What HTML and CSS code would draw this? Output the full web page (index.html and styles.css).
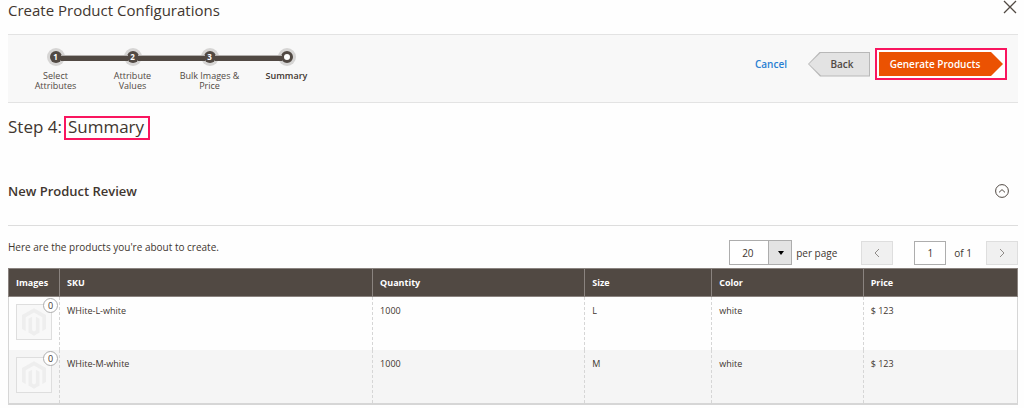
FILE: index.html
```html
<!DOCTYPE html>
<html lang="en">

<head>
    <meta charset="UTF-8">
    <meta name="viewport" content="width=device-width, initial-scale=1.0">
    <title>Create Product Configurations</title>
    <link rel="stylesheet" href="styles.css">
</head>

<body>
    <svg class="sprite" aria-hidden="true">
        <symbol id="placeholder-logo" viewBox="0 0 26 30">
            <path d="M13 0 L26 7.5 V22.5 L22 24.8 V9.8 L13 4.6 L4 9.8 V24.8 L0 22.5 V7.5 Z" />
            <path d="M7 11.5 L11 9.2 V24 L13 25.2 L15 24 V9.2 L19 11.5 V26.5 L13 30 L7 26.5 Z" />
        </symbol>
    </svg>

    <header class="modal-header">
        <h1 class="modal-title">Create Product Configurations</h1>
        <button class="close" type="button" aria-label="Close">
            <svg width="14" height="14" viewBox="0 0 14 14"><path d="M1 1 L13 13 M13 1 L1 13" /></svg>
        </button>
    </header>

    <main>
        <div class="wizard-bar">
            <ol class="steps">
                <li class="step"><span class="dot">1</span><a href="#">Select Attributes</a></li>
                <li class="step"><span class="dot">2</span><a href="#">Attribute Values</a></li>
                <li class="step"><span class="dot">3</span><a href="#">Bulk Images &amp; Price</a></li>
                <li class="step active"><span class="dot"></span><a href="#">Summary</a></li>
            </ol>
            <div class="actions">
                <a class="cancel" href="#">Cancel</a>
                <button class="back" type="button"><span>Back</span></button>
                <div class="highlight">
                    <button class="next" type="button">Generate Products</button>
                </div>
            </div>
        </div>

        <h2 class="step-title">Step 4: <span class="marked">Summary</span></h2>

        <div class="section-title">
            <h3>New Product Review</h3>
            <button class="collapse" type="button" aria-label="Collapse section">
                <svg width="14" height="14" viewBox="0 0 14 14"><circle cx="7" cy="7" r="6.4" /><path d="M4 8.4 L7 5.6 L10 8.4" /></svg>
            </button>
        </div>

        <div class="toolbar">
            <p class="note">Here are the products you're about to create.</p>
            <div class="page-size">
                <div class="select-wrap">
                    <select id="per-page">
                        <option>20</option>
                        <option>30</option>
                        <option>50</option>
                    </select>
                </div>
                <label for="per-page">per page</label>
            </div>
            <div class="pager">
                <button class="page-btn" type="button" aria-label="Previous page" disabled>
                    <svg width="6" height="10" viewBox="0 0 6 10"><path d="M5 1 L1 5 L5 9" /></svg>
                </button>
                <input class="page-input" id="page" type="text" value="1">
                <label class="page-count" for="page">of 1</label>
                <button class="page-btn" type="button" aria-label="Next page" disabled>
                    <svg width="6" height="10" viewBox="0 0 6 10"><path d="M1 1 L5 5 L1 9" /></svg>
                </button>
            </div>
        </div>

        <table class="data-grid">
            <colgroup>
                <col class="col-images">
                <col class="col-sku">
                <col class="col-qty">
                <col class="col-size">
                <col class="col-color">
                <col class="col-price">
            </colgroup>
            <thead>
                <tr>
                    <th>Images</th>
                    <th>SKU</th>
                    <th>Quantity</th>
                    <th>Size</th>
                    <th>Color</th>
                    <th>Price</th>
                </tr>
            </thead>
            <tbody>
                <tr>
                    <td>
                        <div class="thumb">
                            <svg width="24" height="28"><use href="#placeholder-logo" /></svg>
                            <span class="count">0</span>
                        </div>
                    </td>
                    <td>WHite-L-white</td>
                    <td>1000</td>
                    <td>L</td>
                    <td>white</td>
                    <td>$ 123</td>
                </tr>
                <tr>
                    <td>
                        <div class="thumb">
                            <svg width="24" height="28"><use href="#placeholder-logo" /></svg>
                            <span class="count">0</span>
                        </div>
                    </td>
                    <td>WHite-M-white</td>
                    <td>1000</td>
                    <td>M</td>
                    <td>white</td>
                    <td>$ 123</td>
                </tr>
            </tbody>
        </table>
    </main>
</body>

</html>
```
FILE: styles.css
```css
* {
    box-sizing: border-box;
}

body {
    margin: 0;
    padding: 0 6px 0 8px;
    font-family: "Open Sans", sans-serif;
    font-size: 10px;
    line-height: 14px;
    color: #41362f;
    background-color: #fefefe;
}

h1,
h2,
h3,
p {
    margin: 0;
    font-weight: 400;
}

button,
input,
select {
    font: inherit;
    color: inherit;
    margin: 0;
    padding: 0;
}

svg {
    display: block;
}

.sprite {
    position: absolute;
    width: 0;
    height: 0;
}

/* Header */
.modal-header {
    display: flex;
    justify-content: space-between;
    align-items: flex-start;
    height: 34px;
    padding-right: 1px;
}

.modal-title {
    font-size: 15px;
    line-height: 20px;
}

.close,
.collapse {
    border: none;
    background: none;
}

.close svg {
    stroke: #514943;
    stroke-width: 1.3;
}

/* Wizard bar */
.wizard-bar {
    display: flex;
    justify-content: space-between;
    height: 69px;
    padding: 0 11px 0 9px;
    border-top: 1px solid #e3e3e3;
    border-bottom: 1px solid #e3e3e3;
    background-color: #f8f8f8;
}

.steps {
    display: flex;
    margin: 0;
    padding: 14px 0 0;
    list-style: none;
}

.step {
    position: relative;
    display: flex;
    flex-direction: column;
    align-items: center;
    gap: 6px;
    width: 77px;
    padding: 0 6px;
    font-size: 9px;
    font-weight: 500;
    line-height: 10px;
    text-align: center;
}

.step a {
    color: #514943;
    text-decoration: none;
}

.step.active a {
    color: #41362f;
    font-weight: 600;
}

/* line from this dot to the next one */
.step:not(:last-child)::after {
    content: "";
    position: absolute;
    z-index: 3;
    top: 6px;
    left: calc(50% + 5px);
    width: calc(100% - 10px);
    height: 5px;
    border-top: 1px solid #b3b0ae;
    background-color: #514943;
}

.dot {
    position: relative;
    z-index: 2;
    width: 12px;
    height: 12px;
    margin: 2px;
    border-radius: 50%;
    background-color: #514943;
    box-shadow: 0 0 0 3px #d6d5d4;
    color: #ffffff;
    font-size: 8px;
    font-weight: 700;
    line-height: 12px;
}

.active .dot {
    border: 3px solid #514943;
    background-color: #ffffff;
}

.actions {
    display: flex;
    align-items: center;
    height: 58px;
    font-weight: 600;
}

.cancel {
    margin-right: 21px;
    color: #2a80d2;
    text-decoration: none;
}

.back {
    position: relative;
    width: 62px;
    height: 25px;
    padding-left: 6px;
    border: none;
    background-color: #b8b8b8;
    clip-path: polygon(0 50%, 12px 0, 100% 0, 100% 100%, 12px 100%);
    color: #514943;
}

.back::before {
    content: "";
    position: absolute;
    inset: 1px;
    background-color: #e3e3e3;
    clip-path: polygon(0 50%, 12px 0, 100% 0, 100% 100%, 12px 100%);
}

.back span {
    position: relative;
}

.highlight {
    margin-left: 5px;
    padding: 2px;
    border: 2px solid #f9155f;
    background-color: #ffffff;
}

.next {
    display: block;
    width: 124px;
    height: 24px;
    padding-right: 12px;
    border: none;
    background-color: #eb5202;
    clip-path: polygon(0 0, 112px 0, 100% 50%, 112px 100%, 0 100%);
    color: #ffffff;
}

/* Step content */
.step-title {
    display: flex;
    align-items: baseline;
    gap: 2px;
    margin-top: 13px;
    font-size: 17px;
    line-height: 18px;
}

.marked {
    padding: 0 4px 2px 2px;
    border: 2px solid #f9155f;
}

.section-title {
    display: flex;
    justify-content: space-between;
    align-items: center;
    height: 70px;
    margin-top: 16px;
    padding-right: 9px;
    border-bottom: 1px solid #dddddd;
}

.section-title h3 {
    font-size: 13px;
    font-weight: 600;
    line-height: 18px;
}

.collapse svg {
    fill: none;
    stroke: #514943;
    stroke-width: 1;
}

/* Toolbar */
.toolbar {
    display: flex;
    align-items: center;
    padding: 14px 0 3px;
}

.note {
    margin-right: auto;
    padding-bottom: 11px;
}

.page-size {
    display: flex;
    align-items: center;
    gap: 4px;
}

.select-wrap {
    position: relative;
}

.select-wrap select {
    display: block;
    width: 63px;
    height: 25px;
    padding-left: 12px;
    border: 1px solid #adadad;
    border-radius: 0;
    background: linear-gradient(90deg, #ffffff 38px, #adadad 38px, #adadad 39px, #e3e3e3 39px);
    appearance: none;
}

.select-wrap::after {
    content: "";
    position: absolute;
    top: 11px;
    right: 8px;
    border: 3px solid transparent;
    border-top: 4px solid #000000;
    border-bottom: none;
    pointer-events: none;
}

.pager {
    display: flex;
    align-items: center;
    margin-left: 24px;
}

.page-btn {
    display: flex;
    align-items: center;
    justify-content: center;
    width: 32px;
    height: 24px;
    border: 1px solid #dedede;
    background-color: #f0f0f0;
}

.page-btn svg {
    fill: none;
    stroke: #8f8b88;
}

.page-input {
    width: 32px;
    height: 24px;
    margin-left: 21px;
    border: 1px solid #adadad;
    background-color: #ffffff;
    text-align: center;
}

.page-count {
    margin: 0 14px 0 8px;
}

/* Grid */
.data-grid {
    width: 100%;
    table-layout: fixed;
    border-collapse: separate;
    border-spacing: 0;
    border-bottom: 2px solid #d6d6d6;
    font-size: 9px;
}

.col-images {
    width: 51px;
}

.col-sku {
    width: 31%;
}

.col-qty {
    width: 21%;
}

.col-size {
    width: 127px;
}

.col-color {
    width: 15%;
}

.data-grid th {
    height: 29px;
    padding: 0 7px;
    border: 1px solid #8a837f;
    border-right: none;
    background-color: #514943;
    color: #ffffff;
    font-weight: 700;
    text-align: left;
}

.data-grid th:last-child {
    border-right: 1px solid #8a837f;
}

.data-grid td {
    height: 53px;
    padding: 7px;
    border-left: 1px dashed #d6d6d6;
    vertical-align: top;
}

.data-grid td:first-child {
    border-left-style: solid;
}

.data-grid td:last-child {
    border-right: 1px solid #d6d6d6;
}

.data-grid tbody tr:nth-child(even) {
    background-color: #f5f5f5;
}

.thumb {
    position: relative;
    display: flex;
    align-items: center;
    justify-content: center;
    width: 36px;
    height: 36px;
    border: 1px solid #dedede;
    background-color: #f8f8f8;
}

.thumb svg {
    fill: #eeeeee;
}

.count {
    position: absolute;
    top: -7px;
    right: -7px;
    width: 15px;
    height: 15px;
    border: 1px solid #adadad;
    border-radius: 50%;
    background-color: #ffffff;
    font-size: 9px;
    line-height: 13px;
    text-align: center;
}
```
